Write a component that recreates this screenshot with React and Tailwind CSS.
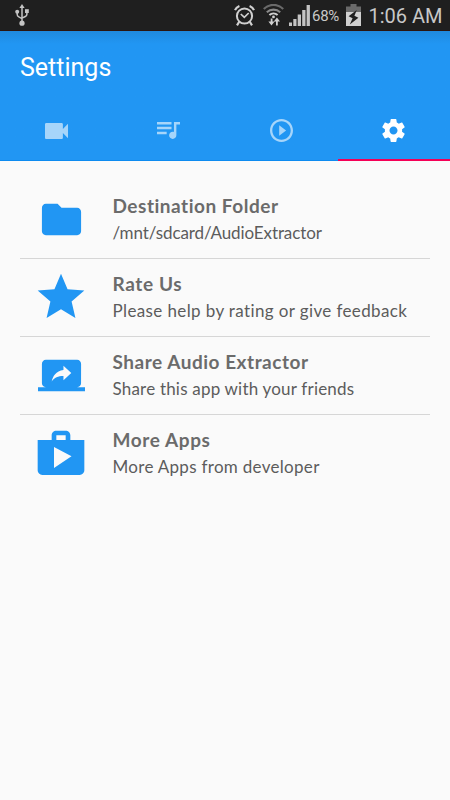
import clsx from 'clsx'

const tabs = [
  {
    id: 'video',
    viewBox: '3 6 18 12',
    size: 'w-[23px] h-4',
    path: 'M17 10.5V7c0-.55-.45-1-1-1H4c-.55 0-1 .45-1 1v10c0 .55.45 1 1 1h12c.55 0 1-.45 1-1v-3.5l4 4v-11l-4 4z',
  },
  {
    id: 'audio',
    viewBox: '3 6 19 14',
    size: 'w-[23px] h-[17px]',
    path: 'M15 6H3v2h12V6zm0 4H3v2h12v-2zM3 16h8v-2H3v2zM17 6v8.18c-.31-.11-.65-.18-1-.18-1.66 0-3 1.34-3 3s1.34 3 3 3 3-1.34 3-3V8h3V6h-5z',
  },
  {
    id: 'player',
    viewBox: '2 2 20 20',
    size: 'w-[23px] h-[23px]',
    path: 'M10 16.5l6-4.5-6-4.5v9zM12 2C6.48 2 2 6.48 2 12s4.48 10 10 10 10-4.48 10-10S17.52 2 12 2zm0 18c-4.41 0-8-3.59-8-8s3.59-8 8-8 8 3.59 8 8-3.59 8-8 8z',
  },
  {
    id: 'settings',
    viewBox: '2 2 20 20',
    size: 'w-[23px] h-[23px]',
    active: true,
    path: 'M19.43 12.98c.04-.32.07-.64.07-.98s-.03-.66-.07-.98l2.11-1.65c.19-.15.24-.42.12-.64l-2-3.46c-.12-.22-.39-.3-.61-.22l-2.49 1c-.52-.4-1.08-.73-1.69-.98l-.38-2.65C14.46 2.18 14.25 2 14 2h-4c-.25 0-.46.18-.49.42l-.38 2.65c-.61.25-1.17.59-1.69.98l-2.49-1c-.23-.09-.49 0-.61.22l-2 3.46c-.13.22-.07.49.12.64l2.11 1.65c-.04.32-.07.65-.07.98s.03.66.07.98l-2.11 1.65c-.19.15-.24.42-.12.64l2 3.46c.12.22.39.3.61.22l2.49-1c.52.4 1.08.73 1.69.98l.38 2.65c.03.24.24.42.49.42h4c.25 0 .46-.18.49-.42l.38-2.65c.61-.25 1.17-.59 1.69-.98l2.49 1c.23.09.49 0 .61-.22l2-3.46c.12-.22.07-.49-.12-.64l-2.11-1.65zM12 15.5c-1.93 0-3.5-1.57-3.5-3.5s1.57-3.5 3.5-3.5 3.5 1.57 3.5 3.5-1.57 3.5-3.5 3.5z',
  },
]

const items = [
  {
    title: 'Destination Folder',
    text: '/mnt/sdcard/AudioExtractor',
    titleClass: 'tracking-[0.52px]',
    textClass: 'tracking-[-0.1px]',
    iconClass: 'w-[47px] h-[47px]',
    path: 'M10 4H4c-1.1 0-1.99.9-1.99 2L2 18c0 1.1.9 2 2 2h16c1.1 0 2-.9 2-2V8c0-1.1-.9-2-2-2h-8l-2-2z',
  },
  {
    title: 'Rate Us',
    text: 'Please help by rating or give feedback',
    titleClass: 'tracking-[0.62px]',
    textClass: 'tracking-[0.38px]',
    iconClass: 'w-14 h-14',
    path: 'M12 17.27L18.18 21l-1.64-7.03L22 9.24l-7.19-.61L12 2 9.19 8.63 2 9.24l5.46 4.73L5.82 21z',
  },
  {
    title: 'Share Audio Extractor',
    text: 'Share this app with your friends',
    titleClass: 'tracking-[0.52px]',
    textClass: 'tracking-[0.2px]',
    iconClass: 'w-[47px] h-[47px]',
    path: 'M20 18c1.1 0 1.99-.9 1.99-2L22 6c0-1.11-.9-2-2-2H4c-1.11 0-2 .89-2 2v10c0 1.1.89 2 2 2H0v2h24v-2h-4zm-7-3.53v-2.19c-2.78 0-4.61.85-6 2.72.56-2.67 2.11-5.33 6-5.87V7l4 3.73-4 3.74z',
  },
  {
    title: 'More Apps',
    text: 'More Apps from developer',
    titleClass: 'tracking-[0.6px]',
    textClass: 'tracking-[0.3px]',
    iconClass: 'w-14 h-14',
    path: 'M16 6V4c0-1.11-.89-2-2-2h-4c-1.11 0-2 .89-2 2v2H2v13c0 1.11.89 2 2 2h16c1.11 0 2-.89 2-2V6h-6zm-6-2h4v2h-4V4zM9 18V9l7.5 4L9 18z',
  },
]

function UsbIcon() {
  return (
    <svg viewBox="0 0 14 22" className="w-3.5 h-[22px]" fill="#c4c4c4">
      <path d="M7 0l2.6 4H4.4z" />
      <path d="M7 3v16M2.2 8v2.6c0 1.2.6 1.8 1.6 2.3L7 14.6M11.9 7v3.2c0 1.2-.6 1.8-1.6 2.3L7 14.2" fill="none" stroke="#c4c4c4" strokeWidth="1.5" />
      <circle cx="2.2" cy="7.8" r="2" />
      <rect x="10" y="5.2" width="3.8" height="3.8" />
      <circle cx="7" cy="19.2" r="2.6" />
    </svg>
  )
}

function AlarmIcon() {
  return (
    <svg viewBox="0 0 21 21" className="w-[21px] h-[21px]" fill="none" stroke="#d0d0d0">
      <circle cx="10.5" cy="11" r="7.6" strokeWidth="2" />
      <path d="M6.8 9l3.5 3.4 4.4-4.4" strokeWidth="1.7" />
      <path d="M1 5.2C1.8 3.2 3.3 1.8 5.4 1M20 5.2C19.2 3.2 17.7 1.8 15.6 1" strokeWidth="2.2" />
      <path d="M5.2 16.8l-2.2 3.6M15.8 16.8l2.2 3.6" strokeWidth="2.2" />
    </svg>
  )
}

function WifiIcon() {
  return (
    <svg viewBox="0 0 21 22" className="w-[21px] h-[22px]" fill="none">
      <path d="M.8 5C6.5-.4 14.5-.4 20.2 5" stroke="#6a6a6a" strokeWidth="2.3" />
      <path d="M3.8 8.2c3.8-3.4 9.6-3.4 13.4 0" stroke="#8a8a8a" strokeWidth="2.1" />
      <path d="M6.4 11c2.3-2 5.9-2 8.2 0" stroke="#d0d0d0" strokeWidth="2" />
      <circle cx="10.5" cy="12.9" r="1.4" fill="#d0d0d0" />
      <path d="M8.6 14.4v5M13.9 21.6v-5" stroke="#d0d0d0" strokeWidth="1.8" />
      <path d="M5.4 17.6h6.2l-3.1 4zM10.8 17.6h6.2l-3.1-4z" fill="#d0d0d0" />
    </svg>
  )
}

function SignalIcon() {
  return (
    <svg viewBox="0 0 21 21" className="w-[21px] h-[21px]" fill="#c4c4c4">
      <rect x="0" y="17.5" width="3" height="3.5" />
      <rect x="4.3" y="14" width="3.2" height="7" />
      <rect x="8.7" y="9.5" width="3.3" height="11.5" />
      <rect x="13.2" y="5" width="3.3" height="16" />
      <rect x="17.6" y="0" width="3.3" height="21" />
    </svg>
  )
}

function BatteryIcon() {
  return (
    <svg viewBox="0 0 15 22" className="w-[15px] h-[22px]">
      <path d="M4.5 0h6v2.5H15V8H0V2.5h4.5z" fill="#6a6a6a" />
      <path d="M0 8h15v14H0z" fill="#d0d0d0" />
      <path d="M10.8 6L2.6 12.2l4 2-2.8 6.2 8.6-6.6-4-2z" fill="#1f1f1f" />
    </svg>
  )
}

function StatusBar() {
  return (
    <div className="flex h-[31px] items-center border-b border-[#2b1510] bg-[#1f1f1f] pl-[15px] pr-2 font-['Roboto',sans-serif] text-[#c8c8c8]">
      <UsbIcon />
      <div className="ml-auto flex items-center">
        <AlarmIcon />
        <div className="ml-2"><WifiIcon /></div>
        <div className="ml-[5px]"><SignalIcon /></div>
        <span className="ml-0.5 mt-0.5 w-[29px] whitespace-nowrap text-[15px] leading-5 tracking-[-0.3px]">68%</span>
        <div className="ml-[5px]"><BatteryIcon /></div>
        <span className="ml-[7.5px] mt-px w-[73.5px] whitespace-nowrap text-[20px] leading-6">1:06 AM</span>
      </div>
    </div>
  )
}

function Header() {
  return (
    <header className="flex h-[130px] flex-col border-b border-[#0d8bf0] bg-[#2196f3] bg-linear-to-b from-[#2089de] to-[#2196f3] to-10%">
      <h1 className="pl-5 pt-[19px] font-['Roboto',sans-serif] text-[25px] leading-9 text-white">Settings</h1>
      <nav className="mt-auto grid h-[57px] grid-cols-4">
        {tabs.map((tab) => (
          <button
            key={tab.id}
            aria-label={tab.id}
            className={clsx('flex items-center justify-center', tab.active ? 'text-white' : 'text-[#a6d5fa]')}
          >
            <svg viewBox={tab.viewBox} className={tab.size} fill="currentColor" preserveAspectRatio="none">
              <path d={tab.path} />
            </svg>
          </button>
        ))}
      </nav>
      <div className="-mb-px ml-auto h-0.5 w-28 shrink-0 bg-[#f50057]" />
    </header>
  )
}

function SettingsItem({ item }) {
  return (
    <li className="flex h-[78px] items-center border-b border-[#d6d6d6] last:border-b-0">
      <div className="flex w-[82px] shrink-0 justify-center pb-px">
        <svg viewBox="0 0 24 24" className={item.iconClass} fill="#2196f3">
          <path d={item.path} />
        </svg>
      </div>
      <div className="ml-[10.5px] whitespace-nowrap pb-0.5">
        <h2 className={clsx('text-[19px] leading-[27px] font-bold text-[#6b6b6b]', item.titleClass)}>{item.title}</h2>
        <p className={clsx('text-[17px] leading-[27px] text-[#5c5c5c]', item.textClass)}>{item.text}</p>
      </div>
    </li>
  )
}

function App() {
  return (
    <div className="flex h-[800px] w-[450px] flex-col overflow-hidden bg-[#fafafa] font-['Lato',sans-serif]">
      <StatusBar />
      <Header />
      <ul className="flex flex-col px-5 pt-5">
        {items.map((item) => (
          <SettingsItem key={item.title} item={item} />
        ))}
      </ul>
    </div>
  )
}

export default App
